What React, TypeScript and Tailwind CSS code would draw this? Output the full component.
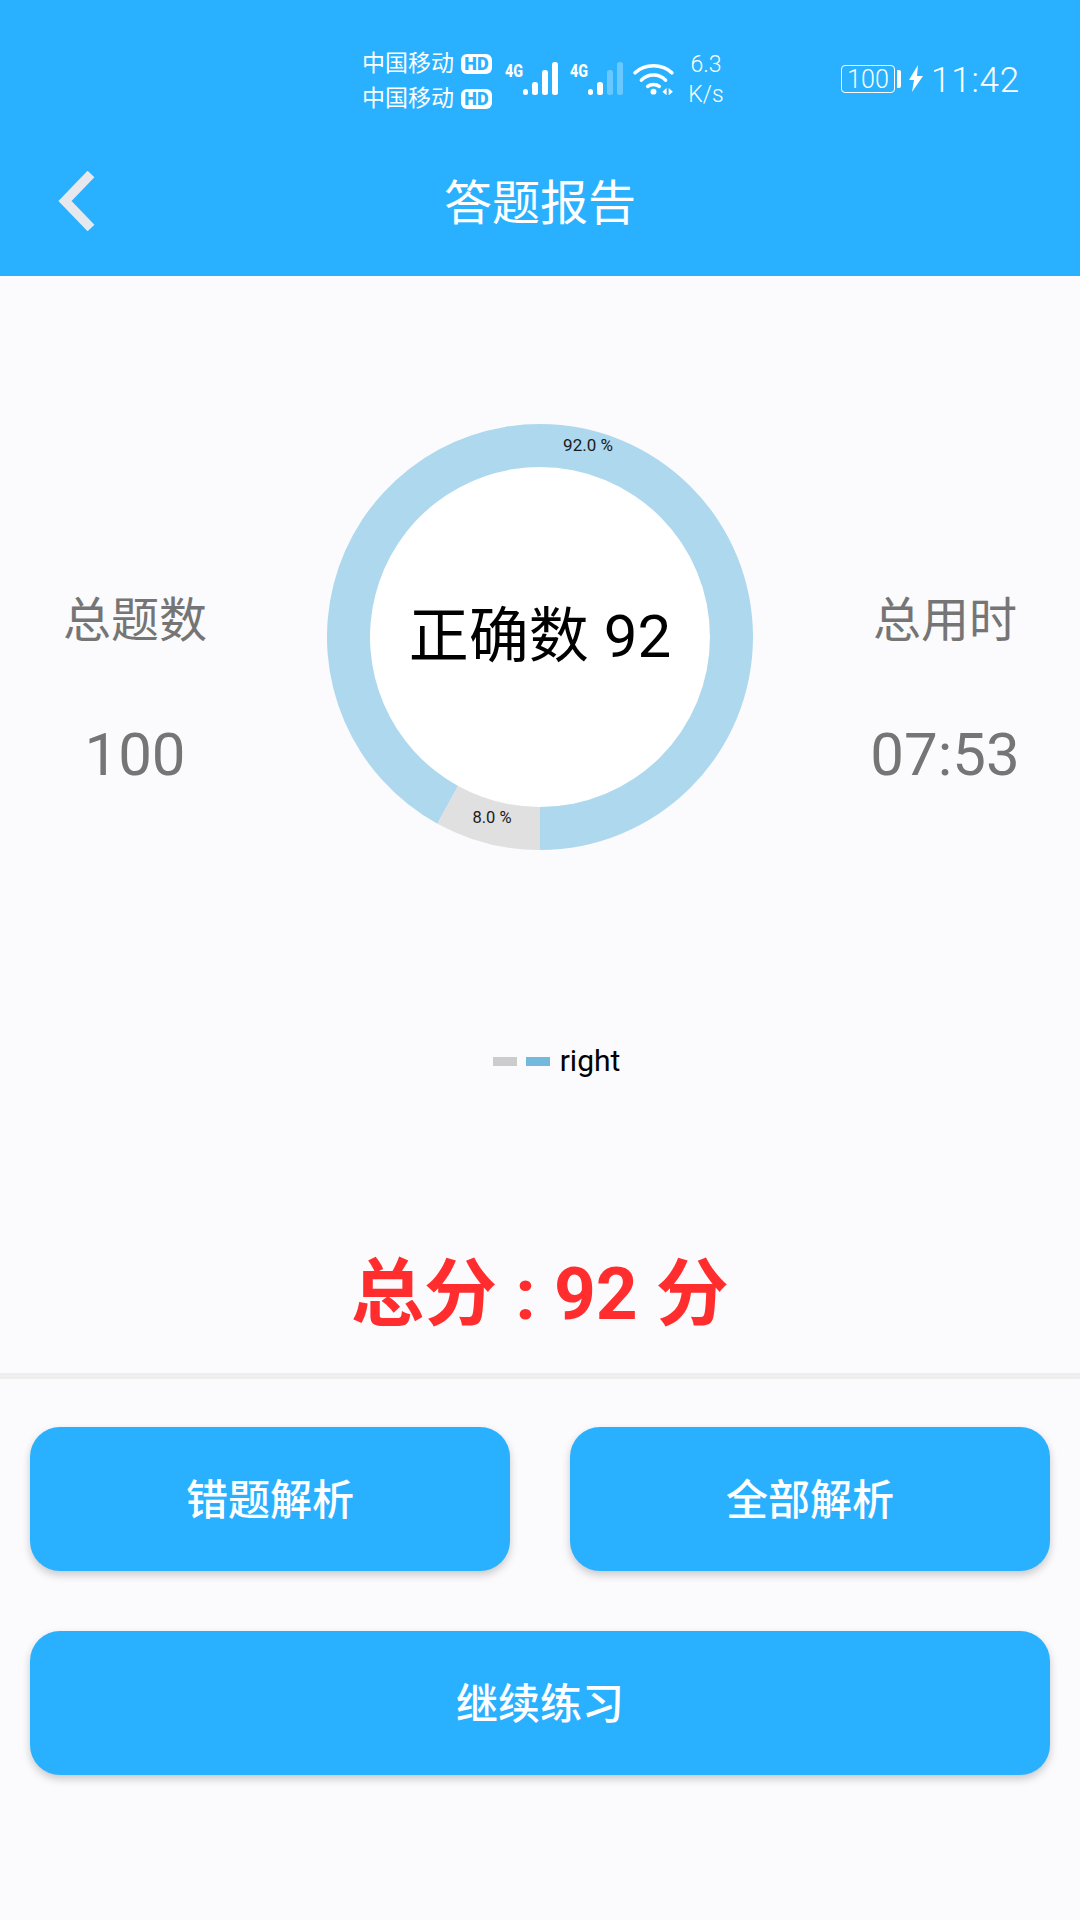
const FONT = "font-['Roboto','Noto_Sans_CJK_SC',sans-serif]";

function Carrier() {
  return (
    <div className="flex h-[35px] items-center gap-[7px]">
      <span className="text-[23px] leading-none text-white">中国移动</span>
      <span className="flex h-[20px] w-[31px] items-center justify-center rounded-[6px] bg-white text-[18px] leading-none font-black text-[#29b1ff]">
        HD
      </span>
    </div>
  );
}

function Signal({ weak }: { weak?: boolean }) {
  const faded = weak ? 0.3 : 1;
  return (
    <svg width="54" height="38" viewBox="0 0 54 38" className="block">
      <text x="0" y="19" fontSize="18" fontWeight="800" fill="#fff" textLength="18" lengthAdjust="spacingAndGlyphs">
        4G
      </text>
      <rect x="18" y="31" width="5" height="6" rx="2.5" fill="#fff" />
      <rect x="27" y="24" width="6" height="13" rx="2.5" fill="#fff" />
      <rect x="37" y="12" width="6" height="25" rx="2.5" fill="#fff" fillOpacity={faded} />
      <rect x="47" y="4" width="6" height="33" rx="2.5" fill="#fff" fillOpacity={faded} />
    </svg>
  );
}

function Wifi() {
  return (
    <svg width="42" height="34" viewBox="0 0 40 32" fill="none" className="block">
      <path d="M2 11C11 2 28 2 37 11" stroke="#fff" strokeWidth="3.4" strokeLinecap="round" />
      <path d="M8 18C14 11.5 25 11.5 31 18" stroke="#fff" strokeWidth="3.4" strokeLinecap="round" />
      <path d="M14 24C17 21.5 22 21.5 25 24" stroke="#fff" strokeWidth="3.4" strokeLinecap="round" />
      <circle cx="19.5" cy="29" r="2.8" fill="#fff" />
      <path d="M28 29l4-3.500v7zM34 25.500l4 3.500-4 3.500z" fill="#fff" />
    </svg>
  );
}

function StatusBar() {
  return (
    <div className="flex h-[130px] items-start pt-[46px] pl-[362px] text-white">
      <div className="flex flex-col">
        <Carrier />
        <Carrier />
      </div>
      <div className="mt-[12px] ml-[13px] flex items-start gap-[11px]">
        <Signal />
        <Signal weak />
      </div>
      <div className="mt-[15px] ml-[9px]">
        <Wifi />
      </div>
      <div className="mt-[4px] ml-[11px] flex w-[40px] flex-col items-center text-[23px] leading-[30px] font-light">
        <span>6.3</span>
        <span>K/s</span>
      </div>
      <div className="mt-[19px] ml-[115px] flex h-[28px] w-[54px] items-center justify-center rounded-[4px] border-[1.5px] border-white text-[25px] leading-none font-light">
        100
      </div>
      <div className="mt-[24px] ml-[2px] h-[18px] w-[4px] rounded-r-[2px] bg-white" />
      <svg width="14" height="27" viewBox="0 0 14 27" className="mt-[19px] ml-[8px] block">
        <path d="M9 0L0 15h5l-2 12 11-16H8z" fill="#fff" />
      </svg>
      <span className="mt-[15px] ml-[8px] text-[35px] leading-[40px] font-light tracking-[0.8px]">11:42</span>
    </div>
  );
}

function Header() {
  return (
    <header className="h-[276px] bg-[#29b1ff]">
      <StatusBar />
      <div className="relative flex h-[146px] items-start justify-center pt-[46px]">
        <svg width="38" height="60" viewBox="0 0 38 60" className="absolute top-[41px] left-[58px] block">
          <path d="M33 3L7 30l26 27" fill="none" stroke="#e6e8ee" strokeWidth="9.5" />
        </svg>
        <h1 className="text-[48px] leading-[56px] font-normal text-white">答题报告</h1>
      </div>
    </header>
  );
}

function Stat({ label, value }: { label: string; value: string }) {
  return (
    <div className="flex flex-col items-center pt-[169px] text-[#757575]">
      <span className="text-[48px] leading-[56px]">{label}</span>
      <span className="mt-[78px] text-[60px] leading-[56px]">{value}</span>
    </div>
  );
}

function polar(r: number, deg: number) {
  const a = (deg * Math.PI) / 180;
  return `${213 + r * Math.sin(a)} ${213 - r * Math.cos(a)}`;
}

function slice(from: number, to: number) {
  const large = to - from > 180 ? 1 : 0;
  return `M${polar(213, from)}A213 213 0 ${large} 1 ${polar(213, to)}L${polar(170, to)}A170 170 0 ${large} 0 ${polar(170, from)}Z`;
}

function Donut() {
  return (
    <div className="relative h-[426px] w-[426px]">
      <svg width="426" height="426" viewBox="0 0 426 426" className="block">
        <circle cx="213" cy="213" r="170" fill="#fff" />
        <path d={slice(208.8, 360) + slice(0, 180)} fill="#add8ee" />
        <path d={slice(180, 208.8)} fill="#e0e0e0" />
        <text x="261" y="27" fontSize="17" textAnchor="middle" fill="#1a1a1a">
          92.0 %
        </text>
        <text x="165" y="399" fontSize="16.5" textAnchor="middle" fill="#1a1a1a">
          8.0 %
        </text>
      </svg>
      <div className="absolute inset-0 flex items-center justify-center text-[60px] leading-none whitespace-nowrap text-black">
        正确数 92
      </div>
    </div>
  );
}

function ActionButton({ label, className }: { label: string; className?: string }) {
  return (
    <button
      className={`flex h-[144px] items-center justify-center rounded-[30px] bg-[#29b1ff] pt-[3px] text-[42px] font-medium text-white shadow-[0_4px_8px_rgba(0,0,0,0.2)] ${className ?? ""}`}
    >
      {label}
    </button>
  );
}

export default function App() {
  return (
    <div className={`flex h-[1920px] w-[1080px] flex-col overflow-hidden bg-[#fbfafc] ${FONT}`}>
      <Header />

      <section className="grid grid-cols-[270px_1fr_270px] pt-[148px]">
        <Stat label="总题数" value="100" />
        <div className="flex justify-center">
          <Donut />
        </div>
        <Stat label="总用时" value="07:53" />
      </section>

      <div className="mt-[193px] flex h-[36px] items-center justify-center gap-[9px] pl-[33px]">
        <span className="h-[9px] w-[24px] bg-[#cccccc]" />
        <span className="h-[9px] w-[24px] bg-[#73b9de]" />
        <span className="ml-[1px] text-[30px] leading-none text-black">right</span>
      </div>

      <div className="mt-[175px] text-center text-[73px] leading-[80px] font-bold text-[#ff2d2d]">总分 : 92 分</div>

      <div className="mt-[39px] h-[6px] bg-[#eeeeee]" />

      <div className="flex flex-col gap-[60px] px-[30px] pt-[48px]">
        <div className="flex justify-between">
          <ActionButton label="错题解析" className="w-[480px]" />
          <ActionButton label="全部解析" className="w-[480px]" />
        </div>
        <ActionButton label="继续练习" className="w-full" />
      </div>
    </div>
  );
}
